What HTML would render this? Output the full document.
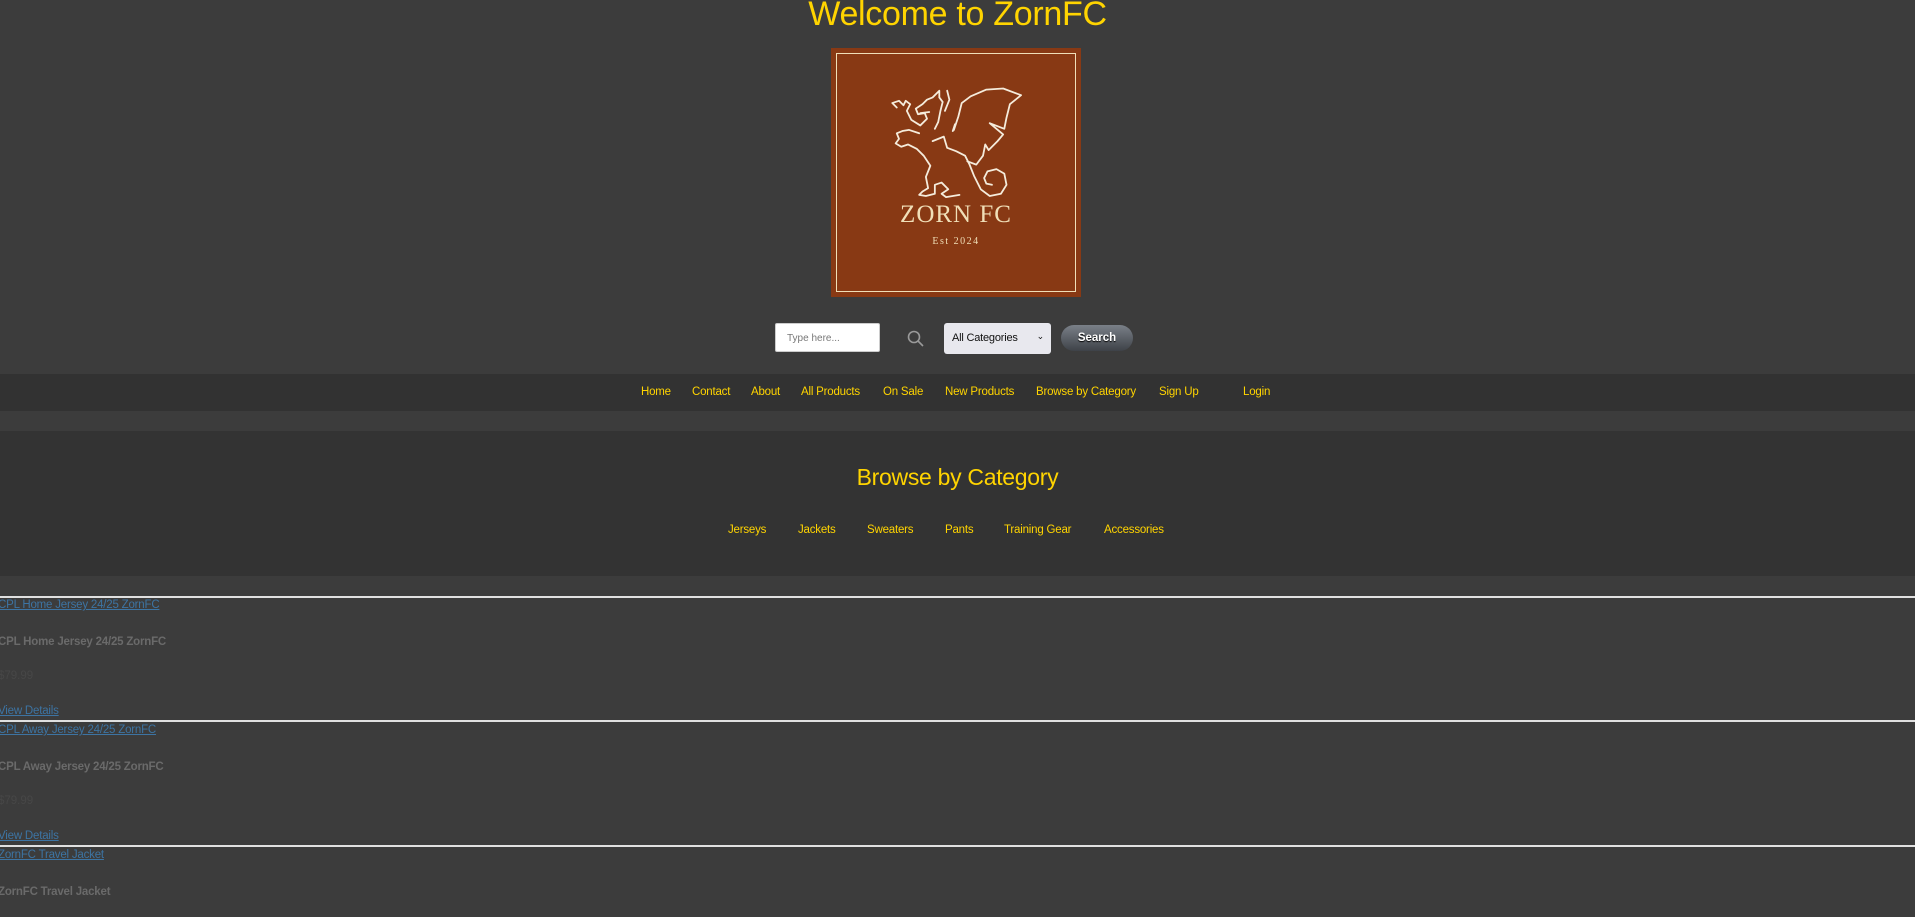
<!DOCTYPE html>
<html><head><meta charset="utf-8"><style>
*{margin:0;padding:0;box-sizing:border-box}
body{width:1915px;height:917px;overflow:hidden;background:#3c3c3c;font-family:"Liberation Sans",Arial,sans-serif;position:relative}
.a{position:absolute}
h1{position:absolute;top:-6px;left:0;width:1915px;text-align:center;color:#ffd400;font-weight:normal;font-size:34px;line-height:40px;letter-spacing:-0.3px}
.logo{left:831px;top:48px;width:250px;height:249px;background:#883914}
.logo .in{position:absolute;left:5px;top:5px;right:5px;bottom:5px;border:1.5px solid #f0dfb8}
.nav{left:0;top:374px;width:1915px;height:37px;background:#323232}
.nav a,.cats a{position:absolute;color:#ffd400;font-size:11.5px;letter-spacing:-0.2px;text-decoration:none;white-space:nowrap}
.cat{left:0;top:431px;width:1915px;height:145px;background:#333}
hr{position:absolute;left:0;width:1915px;border:0;height:2px;background:#e0e0e0}
.pl{position:absolute;left:-2px;font-size:11.5px;letter-spacing:-0.2px;color:#3d74a3;text-decoration:underline;white-space:nowrap}
.ph{position:absolute;left:-2px;font-size:11.5px;letter-spacing:-0.2px;color:#6a6a6a;font-weight:bold;white-space:nowrap}
.pp{position:absolute;left:-2px;font-size:11.5px;color:#474747}
</style></head><body>
<h1>Welcome to ZornFC</h1>
<div class="a logo"><div class="in"></div>
<svg class="a" style="left:0;top:0" width="250" height="249" viewBox="831 48 250 249" fill="none" stroke="#f5ecdc" stroke-width="1.6" stroke-linejoin="round" stroke-linecap="round">
<g transform="translate(955,140) scale(1.12) translate(-955,-140) translate(0,6)">
<path d="M903,105 l-4,-4 l6,-2 l4,4 l2,-4 l4,3 l-3,6 l4,8 l8,5 l6,-6 l-2,-5 l-6,1 l-2,-5 l6,-4 l4,-4 l5,-2 l6,-6 l0,6 l3,4 l-2,8 l-2,10 l-3,6"/>
<path d="M924,110 l8,-1"/>
<path d="M923,128 l-9,-3 l-6,1 l-5,2 l2,5 l-3,4 l5,3 l6,-2 l8,4 l6,6 l6,9 l-4,10 l2,10 l-5,3 l-3,3 l6,1 l8,-2 l0,-8 l6,-2 l6,6 l-6,4 l4,3 l12,-2"/>
<path d="M935,135 l10,-4 l3,10 l8,3 l8,4 l4,8 l4,10 l6,12 l8,6 l10,-2 l5,-8 l-2,-10 l-7,-4 l-8,2 l-3,6 l2,5 l5,1"/>
<path d="M954,125 l4,-12 l3,-12 l8,-6 l14,-6 l15,-1 l16,6 l-10,8 l-3,12 l-2,10 l-13,-5 l12,10 l-5,6 l-8,8 l-3,-5 l-2,10 l-6,8 l-8,-3"/>
<path d="M955,120 l-2,6" />
<path d="M946,108 l4,-10 l-2,-8"/>
</g>
</svg>
<div class="a" style="left:0;top:153px;width:250px;text-align:center;color:#f0dfb8;font-family:'Liberation Serif',serif;font-size:25px;letter-spacing:1px">ZORN FC</div>
<div class="a" style="left:0;top:188px;width:250px;text-align:center;color:#f0dfb8;font-family:'Liberation Serif',serif;font-size:10px;letter-spacing:1.5px">Est 2024</div>
</div>
<div class="a" style="left:775px;top:323px;width:105px;height:29px;background:#fff;border:1px solid #ccc;border-radius:2px;font-size:10px;color:#777;padding:9px 0 0 11px">Type here...</div>
<svg class="a" style="left:906px;top:329px" width="20" height="20" viewBox="0 0 20 20" fill="none" stroke="#9a9a9a" stroke-width="1.6"><circle cx="8" cy="8" r="5.5"/><path d="M12,12 l5,5"/></svg>
<div class="a" style="left:944px;top:323px;width:107px;height:31px;background:#e8e8ee;border-radius:3px;font-size:11px;letter-spacing:-0.2px;color:#111;padding:9px 0 0 8px">All Categories<span style="position:absolute;right:7px;top:8px;font-size:9px">&#8964;</span></div>
<div class="a" style="left:1061px;top:325px;width:72px;height:26px;border-radius:13px;background:linear-gradient(#7a8088,#3e4248);color:#fff;font-weight:bold;font-size:11.5px;text-align:center;line-height:26px;text-shadow:0 1px 1px #000">Search</div>
<div class="a nav">
<a style="left:641px;top:12px">Home</a><a style="left:692px;top:12px">Contact</a><a style="left:751px;top:12px">About</a><a style="left:801px;top:12px">All Products</a><a style="left:883px;top:12px">On Sale</a><a style="left:945px;top:12px">New Products</a><a style="left:1036px;top:12px">Browse by Category</a><a style="left:1159px;top:12px">Sign Up</a><a style="left:1243px;top:12px">Login</a>
</div>
<div class="a cat cats">
<div class="a" style="left:0;top:33px;width:1915px;text-align:center;color:#ffd400;font-size:23px;letter-spacing:-0.3px">Browse by Category</div>
<a style="left:728px;top:93px">Jerseys</a><a style="left:798px;top:93px">Jackets</a><a style="left:867px;top:93px">Sweaters</a><a style="left:945px;top:93px">Pants</a><a style="left:1004px;top:93px">Training Gear</a><a style="left:1104px;top:93px">Accessories</a>
</div>
<hr style="top:596px">
<span class="pl" style="top:599px">CPL Home Jersey 24/25 ZornFC</span>
<span class="ph" style="top:636px">CPL Home Jersey 24/25 ZornFC</span>
<span class="pp" style="top:670px">$79.99</span>
<span class="pl" style="top:705px">View Details</span>
<hr style="top:720px">
<span class="pl" style="top:724px">CPL Away Jersey 24/25 ZornFC</span>
<span class="ph" style="top:761px">CPL Away Jersey 24/25 ZornFC</span>
<span class="pp" style="top:795px">$79.99</span>
<span class="pl" style="top:830px">View Details</span>
<hr style="top:845px">
<span class="pl" style="top:849px">ZornFC Travel Jacket</span>
<span class="ph" style="top:886px">ZornFC Travel Jacket</span>
</body></html>
